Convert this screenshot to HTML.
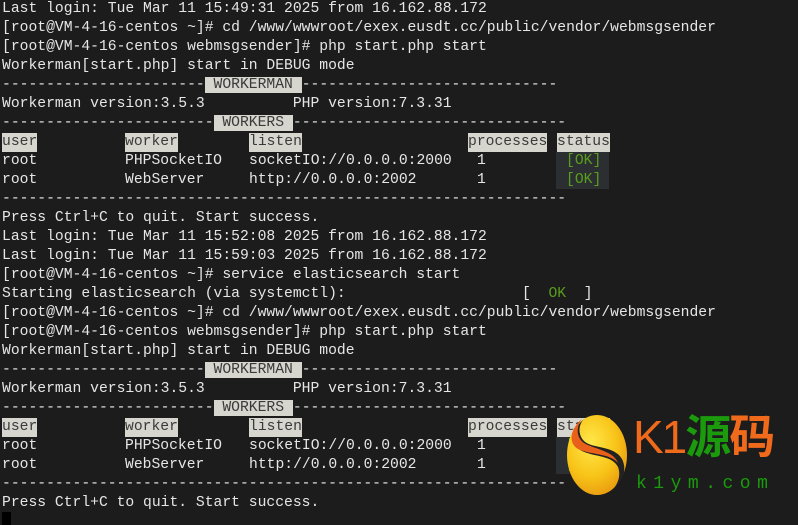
<!DOCTYPE html>
<html><head><meta charset="utf-8"><style>
html,body{margin:0;padding:0;background:#1c1c1c;width:798px;height:525px;overflow:hidden}
.t{position:absolute;left:2px;font-family:"Liberation Mono",monospace;font-size:14.7px;color:#e6e6e6;white-space:pre;line-height:19px;height:19px}
.h{background:#d6d6ce;color:#3a3a3a}
.ok{color:#5a9e1c}
.c{position:absolute;top:0}
.sb{position:absolute;background:#2b2f31}
</style></head><body>
<div class="t" style="top:0">Last login: Tue Mar 11 15:49:31 2025 from 16.162.88.172</div>
<div class="t" style="top:19px">[root@VM-4-16-centos ~]# cd /www/wwwroot/exex.eusdt.cc/public/vendor/webmsgsender</div>
<div class="t" style="top:38px">[root@VM-4-16-centos webmsgsender]# php start.php start</div>
<div class="t" style="top:57px">Workerman[start.php] start in DEBUG mode</div>
<div class="t" style="top:76px">-----------------------<span class="h"> WORKERMAN </span>-----------------------------</div>
<div class="t" style="top:95px">Workerman version:3.5.3          PHP version:7.3.31</div>
<div class="t" style="top:114px">------------------------<span class="h"> WORKERS </span>-------------------------------</div>
<div class="sb" style="left:556px;top:152px;width:53px;height:37px"></div>
<div class="t" style="top:133px;width:700px"><span class="c h" style="left:0">user</span><span class="c h" style="left:123px">worker</span><span class="c h" style="left:247px">listen</span><span class="c h" style="left:466px">processes</span><span class="c h" style="left:555px">status</span></div>
<div class="t" style="top:152px;width:700px"><span class="c" style="left:0">root</span><span class="c" style="left:123px">PHPSocketIO</span><span class="c" style="left:247px">socketIO://0.0.0.0:2000</span><span class="c" style="left:475px">1</span><span class="c ok" style="left:564px">[OK]</span></div>
<div class="t" style="top:171px;width:700px"><span class="c" style="left:0">root</span><span class="c" style="left:123px">WebServer</span><span class="c" style="left:247px">http://0.0.0.0:2002</span><span class="c" style="left:475px">1</span><span class="c ok" style="left:564px">[OK]</span></div>
<div class="t" style="top:190px">----------------------------------------------------------------</div>
<div class="t" style="top:209px">Press Ctrl+C to quit. Start success.</div>
<div class="t" style="top:228px">Last login: Tue Mar 11 15:52:08 2025 from 16.162.88.172</div>
<div class="t" style="top:247px">Last login: Tue Mar 11 15:59:03 2025 from 16.162.88.172</div>
<div class="t" style="top:266px">[root@VM-4-16-centos ~]# service elasticsearch start</div>
<div class="t" style="top:285px">Starting elasticsearch (via systemctl):                    [  <span class="ok">OK</span>  ]</div>
<div class="t" style="top:304px">[root@VM-4-16-centos ~]# cd /www/wwwroot/exex.eusdt.cc/public/vendor/webmsgsender</div>
<div class="t" style="top:323px">[root@VM-4-16-centos webmsgsender]# php start.php start</div>
<div class="t" style="top:342px">Workerman[start.php] start in DEBUG mode</div>
<div class="t" style="top:361px">-----------------------<span class="h"> WORKERMAN </span>-----------------------------</div>
<div class="t" style="top:380px">Workerman version:3.5.3          PHP version:7.3.31</div>
<div class="t" style="top:399px">------------------------<span class="h"> WORKERS </span>-------------------------------</div>
<div class="sb" style="left:556px;top:437px;width:53px;height:37px"></div>
<div class="t" style="top:418px;width:700px"><span class="c h" style="left:0">user</span><span class="c h" style="left:123px">worker</span><span class="c h" style="left:247px">listen</span><span class="c h" style="left:466px">processes</span><span class="c h" style="left:555px">status</span></div>
<div class="t" style="top:437px;width:700px"><span class="c" style="left:0">root</span><span class="c" style="left:123px">PHPSocketIO</span><span class="c" style="left:247px">socketIO://0.0.0.0:2000</span><span class="c" style="left:475px">1</span><span class="c ok" style="left:564px">[OK]</span></div>
<div class="t" style="top:456px;width:700px"><span class="c" style="left:0">root</span><span class="c" style="left:123px">WebServer</span><span class="c" style="left:247px">http://0.0.0.0:2002</span><span class="c" style="left:475px">1</span><span class="c ok" style="left:564px">[OK]</span></div>
<div class="t" style="top:475px">----------------------------------------------------------------</div>
<div class="t" style="top:494px">Press Ctrl+C to quit. Start success.</div>
<div style="position:absolute;left:2px;top:512px;width:9px;height:13px;background:#000"></div>

<svg style="position:absolute;left:560px;top:405px" width="100" height="100" viewBox="0 0 100 100">
<defs><radialGradient id="g" cx="0.4" cy="0.35" r="0.7"><stop offset="0" stop-color="#ffe84a"/><stop offset="0.6" stop-color="#f8c418"/><stop offset="1" stop-color="#e89a10"/></radialGradient></defs>
<ellipse cx="37" cy="50" rx="30" ry="40" fill="url(#g)"/>
<path d="M24 14 C12 24 10 40 22 46 C34 52 52 50 58 62 C62 72 56 84 48 88 C62 80 68 66 62 54 C54 40 32 44 24 36 C18 30 18 20 24 14Z" fill="#222"/>
<path d="M22 14 C10 24 8 38 18 44 C30 50 50 48 58 58 C54 46 34 44 24 38 C16 32 16 22 22 14Z" fill="#e8601a"/>
</svg>
<div style="position:absolute;left:633px;top:408px;font-family:'Liberation Sans','Noto Sans CJK SC',sans-serif;font-size:46px;line-height:58px;font-weight:bold;white-space:nowrap;letter-spacing:-2px"><span style="color:#f06a1c;font-weight:normal">K1</span><span style="color:#1a9a0c">源</span><span style="color:#f06a1c">码</span></div>
<div style="position:absolute;left:636px;top:474px;font-family:'Liberation Mono',monospace;font-size:18px;letter-spacing:6.5px;color:#1a9a0c;white-space:nowrap">k1ym.com</div>
</body></html>
